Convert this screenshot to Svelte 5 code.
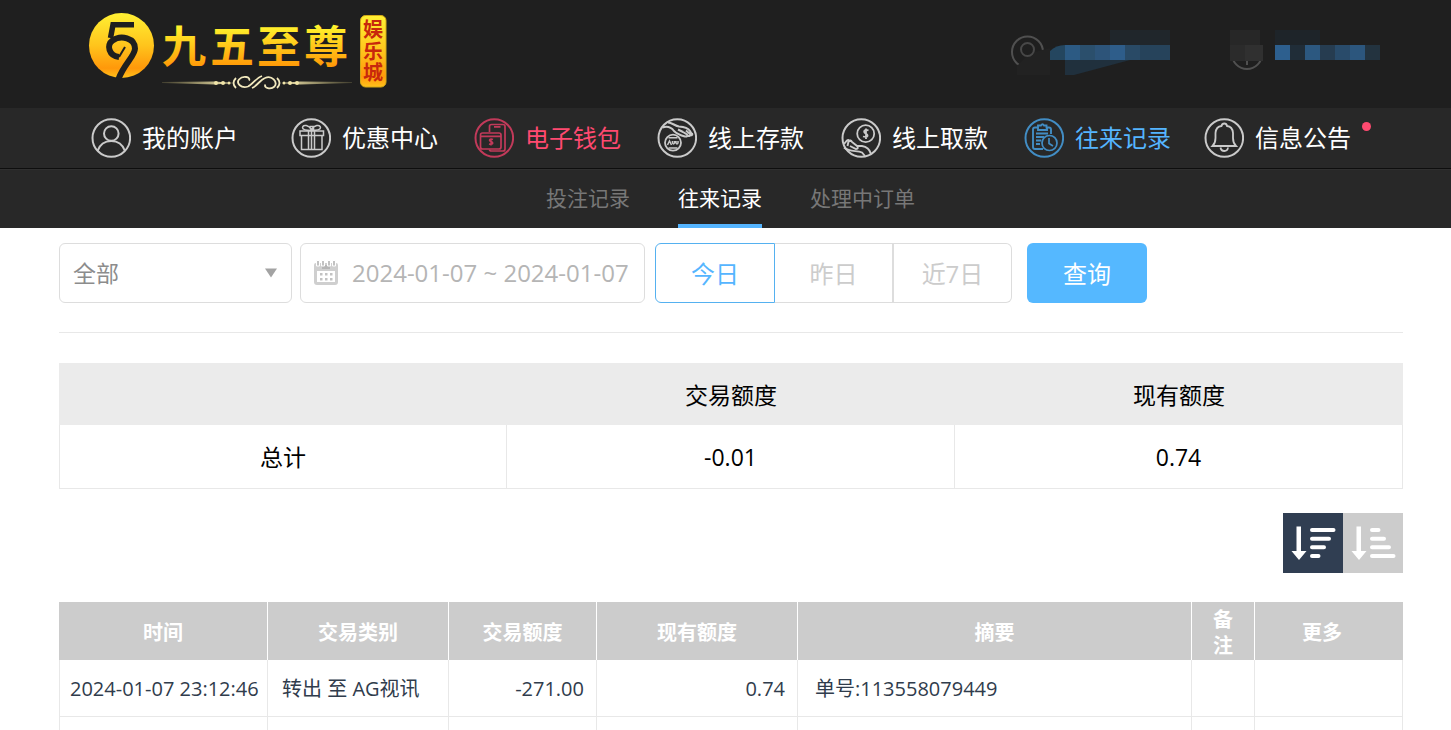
<script>
  const nav = [
    { label: '我的账户', icon: 'user' },
    { label: '优惠中心', icon: 'gift' },
    { label: '电子钱包', icon: 'wallet', tone: 'pink' },
    { label: '线上存款', icon: 'deposit' },
    { label: '线上取款', icon: 'withdraw' },
    { label: '往来记录', icon: 'records', tone: 'blue' },
    { label: '信息公告', icon: 'bell', dot: true }
  ];
  const tabs = ['投注记录', '往来记录', '处理中订单'];
  const ranges = ['今日', '昨日', '近7日'];
  let tab = $state('往来记录');
  let range = $state('今日');
  let descending = $state(true);
  let dates = $state('2024-01-07 ~ 2024-01-07');
  const columns = ['时间', '交易类别', '交易额度', '现有额度', '摘要', '备注', '更多'];
  const rows = [
    ['2024-01-07 23:12:46', '转出 至 AG视讯', '-271.00', '0.74', '单号:113558079449', '', ''],
    ['', '', '', '', '', '', '']
  ];
  const maskOne = [
    [65, '#2c5a83'], [80, '#2b4f6c'], [95, '#2d5479'], [110, '#2e5d8a'],
    [125, '#294a66'], [140, '#26435b'], [155, '#26435b']
  ];
  const maskTwo = [
    [275, '#2d5f8e'], [290, '#202d38'], [305, '#2c5880'], [320, '#263c50'],
    [335, '#294b6a'], [350, '#2c567d'], [365, '#23333f']
  ];
</script>

<div class="page">
  <header class="top">
    <svg class="logo" viewBox="80 0 320 108" role="img" aria-label="九五至尊娱乐城">
      <defs>
        <linearGradient id="gold" x1="0" y1="0" x2="0" y2="1">
          <stop offset="0" stop-color="#fff033" />
          <stop offset="0.5" stop-color="#ffc41c" />
          <stop offset="0.85" stop-color="#ff980a" />
          <stop offset="1" stop-color="#ffc21c" />
        </linearGradient>
        <linearGradient id="goldText" gradientUnits="userSpaceOnUse" x1="0" y1="25" x2="0" y2="66">
          <stop offset="0" stop-color="#fff52e" />
          <stop offset="0.5" stop-color="#ffc81a" />
          <stop offset="1" stop-color="#ff9a08" />
        </linearGradient>
        <linearGradient id="line" gradientUnits="userSpaceOnUse" x1="162" y1="0" x2="352" y2="0">
          <stop offset="0" stop-color="#c9bb74" stop-opacity="0.2" />
          <stop offset="0.35" stop-color="#eee3ae" />
          <stop offset="0.65" stop-color="#eee3ae" />
          <stop offset="1" stop-color="#c9bb74" stop-opacity="0.2" />
        </linearGradient>
      </defs>
      <circle cx="121.500" cy="45.500" r="32.500" fill="url(#gold)" />
      <path d="M134 24.800H113L110.500 38" fill="none" stroke="#1f1f1f" stroke-width="5.500" />
      <path d="M119 57C109 56 106 45 112.500 40.500C121 34.500 135 38 135 48.500C135 56 124 64 118.500 79" fill="none" stroke="#1f1f1f" stroke-width="6" />
      <path d="M119 57L125 47" fill="none" stroke="#1f1f1f" stroke-width="2" />
      <g class="brand" fill="url(#goldText)">
        <text x="162" y="63">九</text>
        <text x="210" y="63">五</text>
        <text x="257" y="63">至</text>
        <text x="304" y="63">尊</text>
      </g>
      <path d="M162 82L215 81.500L233 83L215 84.500L162 83ZM352 82L300 81.500L281 83L300 84.500L352 83Z" fill="url(#line)" />
      <g fill="#f1e5a9">
        <circle cx="216" cy="83" r="2" /><circle cx="223" cy="83" r="2" /><circle cx="229" cy="83" r="1.500" />
        <circle cx="297" cy="83" r="2" /><circle cx="290" cy="83" r="2" /><circle cx="284" cy="83" r="1.500" />
      </g>
      <g fill="none" stroke="#f1e8bd" stroke-width="1.800">
        <path d="M236 78Q231 83 236 88M277 78Q282 83 277 88" />
        <path d="M248 86.500C241 89 236 83 239 79.500C243 75 251 77 249 80.500M248 86.500C252 85 256 78 262 76M252 88C257 86 260 80 265 78M265 78C272 75 278 82 274.500 86.500C271 90 263 88 265.500 84.500" />
      </g>
      <rect x="360.500" y="15.500" width="25.500" height="71.500" rx="5" fill="url(#gold)" stroke="#d3a817" />
      <g class="badge">
        <text x="363" y="37">娱</text>
        <text x="363" y="59">乐</text>
        <text x="363" y="80">城</text>
      </g>
    </svg>
    <svg class="account" viewBox="0 20 400 70" aria-hidden="true">
      <g fill="none" stroke="#505050" stroke-width="2">
        <circle cx="27.500" cy="52" r="15.500" />
        <circle cx="247" cy="54" r="15" />
        <path d="M247 58V65" />
      </g>
      <path d="M17 75V66L30 53L50 48V75Z" fill="#222" />
      <circle cx="27.500" cy="49.500" r="6.500" fill="none" stroke="#484848" stroke-width="2" />
      <path d="M50 60V51Q56 45 65 45V60Z" fill="#24465f" />
      <path d="M65 60H130L74 75H65Z" fill="#20303d" />
      <rect x="110" y="30" width="60" height="15" fill="#20262b" />
      {#each maskOne as [x, fill]}<rect {x} y="45" width="15" height="15" {fill} />{/each}
      <rect x="230" y="30" width="30" height="15" fill="#272727" />
      <rect x="230" y="45" width="15" height="16" fill="#2b2b2b" />
      <rect x="245" y="45" width="18" height="16" fill="#303030" />
      <rect x="275" y="30" width="45" height="15" fill="#1e2429" />
      {#each maskTwo as [x, fill]}<rect {x} y="45" width="15" height="15" {fill} />{/each}
    </svg>
  </header>

  <nav class="main-nav">
    {#each nav as item}
      <a href="#top" class={item.tone}>
        <svg viewBox="0 0 40 40" aria-hidden="true">
          <circle cx="20.300" cy="20" r="18.800" stroke-width="2" />
          {#if item.icon === 'user'}
            <circle cx="20.300" cy="15.500" r="7.300" stroke-width="2" />
            <path d="M6.500 33C9 26 14 23 20.300 23S31.500 26 34 33" stroke-width="2" />
          {:else if item.icon === 'gift'}
            <path d="M9 13H32.500V17.500H9ZM10.500 17.500V31.500H31V17.500M17.500 13V31.500M20.500 13V31.500M23.500 13V31.500" />
            <path d="M20.500 12C18 7 12 6 11.500 9.500C11.500 12 15 12.500 20.500 12.500M20.500 12C23 7 29 6 29.500 9.500C29.500 12 26 12.500 20.500 12.500M18.500 8.500H22.500V12" />
          {:else if item.icon === 'wallet'}
            <path d="M15.500 14V8.500Q15.500 6.500 17.500 6.500H29Q31 6.500 31 8.500V31Q31 33 29 33H17.500Q15.500 33 15.500 31.500M20 8.800H26.500" stroke-width="1.700" />
            <path d="M8.500 15H25Q27 15 27 17V29Q27 31 25 31H8.500Q6.500 31 6.500 29V17Q6.500 15 8.500 15ZM6.500 18.300H27" stroke-width="1.700" />
            <path d="M19 21.500C16 20 14 22.500 17 23.500S19 27 15 26M17 20.500V27.500" />
          {:else if item.icon === 'deposit'}
            <circle cx="16" cy="24.700" r="8" stroke-width="1.800" />
            <path d="M10.500 27L12.500 23L14.500 27M15.500 23V25Q16.500 27 17.500 25V23M19 23V25Q20 27 21 25V23M11.500 30H20.500M11.500 19.700H20.500" stroke-width="1.500" />
            <path d="M11 4.500C15 4.500 18 8 22 8.500C28 9 31 10 33 13L35.500 17.500M5.500 9.500C10 8 14 9 17 13C20 16 24 17.500 28 18.500Q31 19 30 16.500L26 14M30 17.500Q34 19 33 16L29 12.500M33 17Q36 18 35 15M21 11.500L26 14" stroke-width="2" />
          {:else if item.icon === 'withdraw'}
            <circle cx="24.700" cy="15.700" r="8.500" stroke-width="1.800" />
            <path d="M27.500 12.500C24 10.500 21.500 14 24.500 15.500S27.500 20 22 18.500M25 10.500V21" stroke-width="1.800" />
            <path d="M3 26L6 22.500Q8 21 9 24M6.500 28L7.500 23.500Q10 21 11 24L16 28Q18 31 15 31L9 28M16 28H21Q28 29 30 36M3 29.500C9 34.500 16 32 21 34.500L24 38" stroke-width="1.900" />
          {:else if item.icon === 'records'}
            <path d="M19 31H11Q9 31 9 29V11.500Q9 9.500 11 9.500H14V7.500H17Q18.500 5 20 7.500H22.500V9.500H25Q27 9.500 27 11.500V16M14 9.500V12H23V9.500M12 15.500H24M12 19H20M12 22.500H17M12 26H16" stroke-width="1.900" />
            <circle cx="25.500" cy="25" r="7.500" stroke-width="1.700" />
            <path d="M25 20V25.500L29 28" stroke-width="1.700" />
          {:else}
            <path d="M8.500 28Q11.500 25 11.500 20V15Q12 8.500 17.500 8Q18 5.500 20.300 5.500T23 8Q28.500 8.500 29 15V20Q29 25 32 28Z" stroke-width="1.800" />
            <path d="M16.500 29.500Q17 33 20.300 33T24 29.500" stroke-width="1.800" />
          {/if}
        </svg>
        <span>{item.label}</span>
        {#if item.dot}<i class="dot"></i>{/if}
      </a>
    {/each}
  </nav>

  <nav class="sub-nav">
    {#each tabs as name}
      <button class:active={tab === name} onclick={() => (tab = name)}>{name}</button>
    {/each}
  </nav>

  <main>
    <form class="filters" onsubmit={(e) => e.preventDefault()}>
      <div class="select">
        <select aria-label="类别"><option>全部</option></select>
        <svg viewBox="0 0 12 10" aria-hidden="true"><path d="M0 0.500H12L6 9.500Z" /></svg>
      </div>
      <label class="date">
        <svg viewBox="0 0 26 26" aria-hidden="true">
          <path fill-rule="evenodd" d="M1 5Q1 3 3 3H23Q25 3 25 5V22Q25 25 22 25H4Q1 25 1 22ZM4 11V22H22V11Z" fill="#cfcfcf" />
          <path d="M9 5H17V9H9Z" fill="#b5b5b5" />
          <path d="M3.500 0.500H6.500V6H3.500ZM8.500 0.500H11.500V6H8.500ZM14.500 0.500H17.500V6H14.500ZM19.500 0.500H22.500V6H19.500Z" fill="#c2c2c2" stroke="#fff" stroke-width="1" />
          <path d="M7 13H9.500V15.500H7ZM12 13H14.500V15.500H12ZM17 13H19.500V15.500H17ZM7 18H9.500V20.500H7ZM12 18H14.500V20.500H12ZM17 18H19.500V20.500H17Z" fill="#c2c2c2" />
        </svg>
        <input type="text" aria-label="日期" bind:value={dates} />
      </label>
      <div class="ranges">
        {#each ranges as name}
          <button type="button" class:active={range === name} onclick={() => (range = name)}>{name}</button>
        {/each}
      </div>
      <button class="search">查询</button>
    </form>

    <table class="summary">
      <thead><tr><th></th><th>交易额度</th><th>现有额度</th></tr></thead>
      <tbody><tr><td>总计</td><td>-0.01</td><td>0.74</td></tr></tbody>
    </table>

    <div class="sort">
      <button class:active={descending} aria-label="降序" onclick={() => (descending = true)}>
        <svg viewBox="0 0 60 60">
          <path d="M13.500 13.500H18V38H23.500L16 47L8.500 38H13.500Z" />
          <path d="M29 17H50.500M29 25.700H46M29 34.300H41M29 43H35.500" class="bars" />
        </svg>
      </button>
      <button class:active={!descending} aria-label="升序" onclick={() => (descending = false)}>
        <svg viewBox="0 0 60 60">
          <path d="M13.500 13.500H18V38H23.500L16 47L8.500 38H13.500Z" />
          <path d="M29 17H35.500M29 25.700H41M29 34.300H46M29 43H50.500" class="bars" />
        </svg>
      </button>
    </div>

    <table class="records">
      <colgroup>
        <col class="c-time" /><col class="c-type" /><col class="c-amount" /><col class="c-balance" />
        <col /><col class="c-note" /><col class="c-more" />
      </colgroup>
      <thead><tr>{#each columns as c}<th>{c}</th>{/each}</tr></thead>
      <tbody>
        {#each rows as row}
          <tr>{#each row as cell}<td>{cell}</td>{/each}</tr>
        {/each}
      </tbody>
    </table>
  </main>
</div>

<style>
  :global(body) { margin: 0; background: #fff; }
  .page, .page * { box-sizing: border-box; }
  .page {
    height: 100vh;
    overflow: hidden auto;
    scrollbar-width: none;
    font-family: "Open Sans", "Noto Sans CJK SC", sans-serif;
    color: #000;
  }
  button, input, select { font: inherit; margin: 0; }
  button { cursor: pointer; border: 0; padding: 0; background: none; }

  .top {
    display: flex;
    justify-content: space-between;
    align-items: flex-start;
    height: 108px;
    padding: 0 51px 0 80px;
    background: #1f1f1f;
  }
  .logo { width: 320px; height: 108px; }
  .brand { font: 700 44px "Noto Sans CJK SC", sans-serif; }
  .badge { font: 700 20px "Noto Sans CJK SC", sans-serif; fill: #c8280c; }
  .account { width: 400px; height: 70px; margin-top: 20px; }

  .main-nav {
    display: grid;
    grid-template-columns: 200fr 183fr 183fr 184fr 183fr 180fr 247fr;
    height: 61px;
    padding-left: 91px;
    background: #282828;
    border-bottom: 1px solid #0e0e0e;
  }
  .main-nav a {
    display: flex;
    align-items: center;
    gap: 11px;
    color: #fff;
    font-size: 24px;
    line-height: 36px;
    white-space: nowrap;
    text-decoration: none;
  }
  .main-nav svg { width: 40px; height: 40px; flex: none; fill: none; stroke: #cacaca; stroke-width: 1.5; }
  .main-nav .pink { color: #ff4a70; }
  .main-nav .pink svg { stroke: #c23a5a; }
  .main-nav .blue { color: #55b5ff; }
  .main-nav .blue svg { stroke: #428dc4; }
  .dot { width: 9px; height: 9px; margin-bottom: 24px; border-radius: 50%; background: #ff4a70; }

  .sub-nav {
    display: flex;
    justify-content: center;
    gap: 48px;
    height: 59px;
    padding-left: 10px;
    background: #282828;
    border-top: 1px solid #303030;
  }
  .sub-nav button {
    padding-bottom: 2px;
    border: solid transparent;
    border-width: 4px 0;
    color: #777;
    font-size: 21px;
    line-height: 32px;
  }
  .sub-nav .active { color: #fff; border-bottom-color: #55b5ff; }

  main { padding: 15px 48px 0 59px; }
  .filters {
    display: flex;
    height: 90px;
    padding-bottom: 29px;
    border-bottom: 1px solid #e8e8e8;
  }
  .select, .date { display: flex; align-items: center; border: 1px solid #ddd; border-radius: 6px; }
  .select { width: 233px; margin-right: 8px; padding-right: 14px; }
  .select select {
    flex: 1;
    min-width: 0;
    height: 56px;
    padding: 0 0 0 13px;
    border: 0;
    appearance: none;
    background: none;
    color: #8c8c8c;
    font-size: 23px;
  }
  .select svg { width: 12px; height: 10px; fill: #a3a3a3; }
  .date { width: 345px; margin-right: 10px; padding-left: 12px; gap: 13px; }
  .date svg { width: 26px; height: 26px; flex: none; }
  .date input {
    flex: 1;
    min-width: 0;
    height: 56px;
    padding: 0 0 2px;
    border: 0;
    background: none;
    color: #b5b5b5;
    font-size: 24px;
  }
  .ranges { display: flex; margin-right: 15px; }
  .ranges button {
    width: 119px;
    padding-bottom: 2px;
    border: 1px solid #ddd;
    border-left-width: 0;
    color: #ccc;
    font-size: 24px;
  }
  .ranges button:first-child { width: 120px; border-left-width: 1px; border-radius: 6px 0 0 6px; }
  .ranges button:nth-child(2) { border-right-width: 2px; }
  .ranges button:last-child { width: 118px; border-radius: 0 6px 6px 0; }
  .ranges .active { color: #55b5ff; border-color: #55b1f0; }
  .search { width: 120px; padding-bottom: 2px; border-radius: 6px; background: #55b8ff; color: #fff; font-size: 24px; }

  table { width: 100%; table-layout: fixed; border-collapse: separate; border-spacing: 0; }
  .summary { margin-top: 30px; font-size: 23px; line-height: 34px; text-align: center; }
  .summary th { height: 62px; padding: 2px 0 0; background: #ebebeb; font-weight: 400; }
  .summary td { height: 64px; padding: 0; border: solid #e8e8e8; border-width: 0 1px 1px 0; }
  .summary td:first-child { border-left-width: 1px; }

  .sort { display: flex; justify-content: flex-end; margin: 24px 0 29px; }
  .sort button { width: 60px; height: 60px; background: #ccc; }
  .sort .active { background: #303e52; }
  .sort svg { display: block; width: 60px; height: 60px; fill: #fff; }
  .bars { fill: none; stroke: #fff; stroke-width: 4; stroke-linecap: round; }

  .records { font-size: 20px; line-height: 26px; color: #303c4c; }
  .c-time { width: 209px; }
  .c-type { width: 181px; }
  .c-amount { width: 148px; }
  .c-balance { width: 201px; }
  .c-note { width: 63px; }
  .c-more { width: 148px; }
  .records th {
    height: 58px;
    padding: 4px 20px 0;
    background: #ccc;
    border-right: 1px solid #fff;
    color: #fff;
    font-weight: 700;
  }
  .records th:last-child { padding-right: 34px; border-right: 0; }
  .records td {
    height: 57px;
    padding: 2px 10px 0 14px;
    border-right: 1px solid #e8e8e8;
    border-bottom: 1px solid #e8e8e8;
    white-space: nowrap;
  }
  .records td:first-child { padding-left: 10px; padding-right: 0; border-left: 1px solid #e8e8e8; }
  .records td:nth-child(3), .records td:nth-child(4) { padding-right: 12px; text-align: right; }
  .records td:nth-child(5) { padding-left: 17px; }
</style>
